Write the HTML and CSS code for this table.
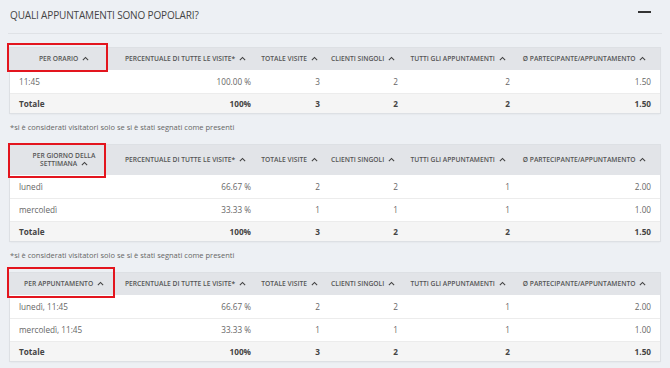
FILE: index.html
```html
<!DOCTYPE html>
<html lang="it">
<head>
<meta charset="utf-8">
<link rel="stylesheet" href="styles.css">
</head>
<body>
<div class="panel">
  <div class="panel-head">
    <h2 class="title">QUALI APPUNTAMENTI SONO POPOLARI?</h2>
    <span class="collapse"></span>
  </div>

  <table class="stats">
    <colgroup>
      <col class="w1"><col class="w2"><col class="w3"><col class="w4"><col class="w5"><col class="w6">
    </colgroup>
    <thead>
      <tr>
        <th class="h1"><span class="mark"></span>PER ORARIO <svg class="sort" viewBox="0 0 8 5"><path d="M1 4.3 L4 1.3 L7 4.3"/></svg></th>
        <th class="h2">PERCENTUALE DI TUTTE LE VISITE* <svg class="sort" viewBox="0 0 8 5"><path d="M1 4.3 L4 1.3 L7 4.3"/></svg></th>
        <th>TOTALE VISITE <svg class="sort" viewBox="0 0 8 5"><path d="M1 4.3 L4 1.3 L7 4.3"/></svg></th>
        <th>CLIENTI SINGOLI <svg class="sort" viewBox="0 0 8 5"><path d="M1 4.3 L4 1.3 L7 4.3"/></svg></th>
        <th>TUTTI GLI APPUNTAMENTI <svg class="sort" viewBox="0 0 8 5"><path d="M1 4.3 L4 1.3 L7 4.3"/></svg></th>
        <th>Ø PARTECIPANTE/APPUNTAMENTO <svg class="sort" viewBox="0 0 8 5"><path d="M1 4.3 L4 1.3 L7 4.3"/></svg></th>
      </tr>
    </thead>
    <tbody>
      <tr><td>11:45</td><td>100.00 %</td><td>3</td><td>2</td><td>2</td><td>1.50</td></tr>
      <tr class="total"><td>Totale</td><td>100%</td><td>3</td><td>2</td><td>2</td><td>1.50</td></tr>
    </tbody>
  </table>
  <p class="note">*si è considerati visitatori solo se si è stati segnati come presenti</p>

  <table class="stats">
    <colgroup>
      <col class="w1"><col class="w2"><col class="w3"><col class="w4"><col class="w5"><col class="w6">
    </colgroup>
    <thead>
      <tr>
        <th class="h1"><span class="mark mark-tall"></span>PER GIORNO DELLA SETTIMANA <svg class="sort" viewBox="0 0 8 5"><path d="M1 4.3 L4 1.3 L7 4.3"/></svg></th>
        <th class="h2">PERCENTUALE DI TUTTE LE VISITE* <svg class="sort" viewBox="0 0 8 5"><path d="M1 4.3 L4 1.3 L7 4.3"/></svg></th>
        <th>TOTALE VISITE <svg class="sort" viewBox="0 0 8 5"><path d="M1 4.3 L4 1.3 L7 4.3"/></svg></th>
        <th>CLIENTI SINGOLI <svg class="sort" viewBox="0 0 8 5"><path d="M1 4.3 L4 1.3 L7 4.3"/></svg></th>
        <th>TUTTI GLI APPUNTAMENTI <svg class="sort" viewBox="0 0 8 5"><path d="M1 4.3 L4 1.3 L7 4.3"/></svg></th>
        <th>Ø PARTECIPANTE/APPUNTAMENTO <svg class="sort" viewBox="0 0 8 5"><path d="M1 4.3 L4 1.3 L7 4.3"/></svg></th>
      </tr>
    </thead>
    <tbody>
      <tr><td>lunedì</td><td>66.67 %</td><td>2</td><td>2</td><td>1</td><td>2.00</td></tr>
      <tr><td>mercoledì</td><td>33.33 %</td><td>1</td><td>1</td><td>1</td><td>1.00</td></tr>
      <tr class="total"><td>Totale</td><td>100%</td><td>3</td><td>2</td><td>2</td><td>1.50</td></tr>
    </tbody>
  </table>
  <p class="note">*si è considerati visitatori solo se si è stati segnati come presenti</p>

  <table class="stats">
    <colgroup>
      <col class="w1"><col class="w2"><col class="w3"><col class="w4"><col class="w5"><col class="w6">
    </colgroup>
    <thead>
      <tr>
        <th class="h1 one-line"><span class="mark mark-wide"></span>PER APPUNTAMENTO <svg class="sort" viewBox="0 0 8 5"><path d="M1 4.3 L4 1.3 L7 4.3"/></svg></th>
        <th class="h2">PERCENTUALE DI TUTTE LE VISITE* <svg class="sort" viewBox="0 0 8 5"><path d="M1 4.3 L4 1.3 L7 4.3"/></svg></th>
        <th>TOTALE VISITE <svg class="sort" viewBox="0 0 8 5"><path d="M1 4.3 L4 1.3 L7 4.3"/></svg></th>
        <th>CLIENTI SINGOLI <svg class="sort" viewBox="0 0 8 5"><path d="M1 4.3 L4 1.3 L7 4.3"/></svg></th>
        <th>TUTTI GLI APPUNTAMENTI <svg class="sort" viewBox="0 0 8 5"><path d="M1 4.3 L4 1.3 L7 4.3"/></svg></th>
        <th>Ø PARTECIPANTE/APPUNTAMENTO <svg class="sort" viewBox="0 0 8 5"><path d="M1 4.3 L4 1.3 L7 4.3"/></svg></th>
      </tr>
    </thead>
    <tbody>
      <tr><td>lunedì, 11:45</td><td>66.67 %</td><td>2</td><td>2</td><td>1</td><td>2.00</td></tr>
      <tr><td>mercoledì, 11:45</td><td>33.33 %</td><td>1</td><td>1</td><td>1</td><td>1.00</td></tr>
      <tr class="total"><td>Totale</td><td>100%</td><td>3</td><td>2</td><td>2</td><td>1.50</td></tr>
    </tbody>
  </table>
</div>
</body>
</html>
```
FILE: styles.css
```css
* { box-sizing: border-box; }
html, body { margin: 0; padding: 0; }
body {
  background: #edf0f4;
  font-family: "Open Sans", "Noto Sans", sans-serif;
  color: #555;
  width: 670px;
  height: 368px;
  overflow: hidden;
}
.panel { padding: 0 10px; }
.panel-head {
  display: flex;
  align-items: center;
  justify-content: space-between;
  height: 34px;
  border-bottom: 1px solid #dfe2e6;
  margin: 0 -2px;
  padding: 0 2px 4px 2px;
}
.title {
  margin: 0;
  font-size: 10px;
  font-weight: 400;
  color: #444;
  letter-spacing: -0.15px;
}
.collapse {
  display: block;
  width: 13px;
  height: 2px;
  background: #333;
  margin-right: 9px;
  margin-bottom: 6px;
}
.stats {
  width: 650px;
  table-layout: fixed;
  border-collapse: collapse;
  margin-top: 14px;
  background: #fff;
  box-shadow: 0 0 0 1px #dde0e4, 0 1px 2px rgba(0,0,0,0.08);
}
.w1 { width: 95px; }
.w2 { width: 155px; }
.w3 { width: 69px; }
.w4 { width: 78px; }
.w5 { width: 112px; }
.w6 { width: 141px; }
.stats th {
  position: relative;
  background: #e2e4e8;
  font-size: 6.7px;
  font-weight: 600;
  color: #555;
  line-height: 8px;
  padding: 7px 10px 7px 0;
  text-align: center;
}
.stats th.h1 { padding: 7px 1px 7px 14px; }
.stats th.h2 { padding: 7px 0 7px 6px; }
.stats th.one-line { white-space: nowrap; }
.sort {
  width: 7px;
  height: 5px;
  margin-left: 2px;
  vertical-align: 0;
  fill: none;
  stroke: #444;
  stroke-width: 1.3;
}
.mark {
  position: absolute;
  z-index: 2;
  left: -3px;
  right: -3px;
  top: -5px;
  bottom: -2px;
  border: 2px solid #e3151e;
  pointer-events: none;
}
.mark-tall { top: -2px; bottom: -3px; left: -2px; right: -1px; }
.mark-wide { top: -6px; bottom: -3px; right: -10px; }
.stats td {
  height: 23px;
  padding: 0 9px;
  font-size: 8.2px;
  color: #666;
  text-align: right;
  border-bottom: 1px solid #ececec;
}
.stats td:first-child { text-align: left; }
.stats tr.total td {
  height: 20px;
  background: #f5f5f5;
  font-weight: 700;
  color: #444;
  border-bottom: none;
}
.note {
  margin: 8px 0 0 0;
  font-size: 7.5px;
  line-height: 12px;
  color: #666;
}
.note + .stats { margin-top: 12px; }
```
